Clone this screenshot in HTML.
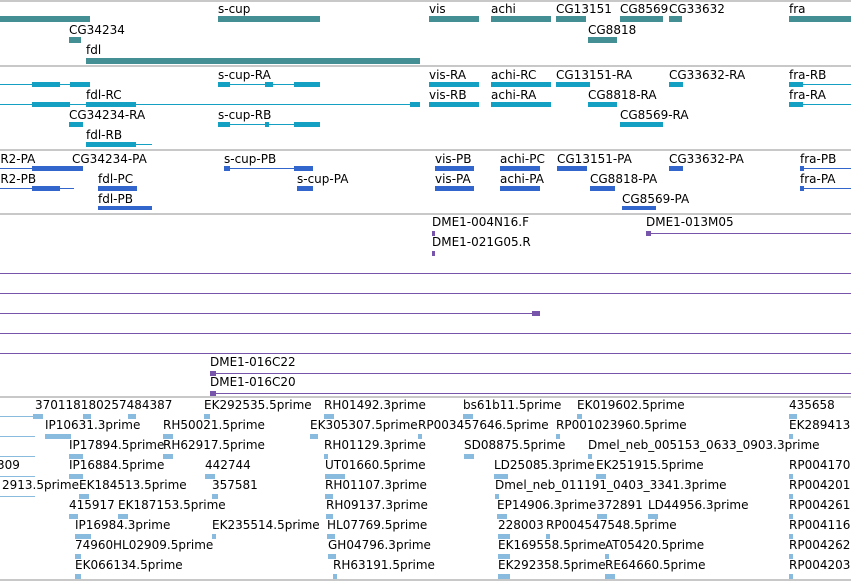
<!DOCTYPE html><html><head><meta charset="utf-8"><style>
body{margin:0;width:851px;height:582px;overflow:hidden;background:#fff;position:relative;font-family:"DejaVu Sans","Liberation Sans",sans-serif;font-size:12px;color:#000}
i{position:absolute;font-style:normal;white-space:nowrap;line-height:14px}
b{position:absolute;display:block}
.s{height:2px;background:#c8c8c8;left:0;width:851px}
.g{background:#438f94;height:6px}
.tl{background:#13a0c2;height:1px}.te{background:#13a0c2;height:5px}
.pl{background:#3366cc;height:1px}.pe{background:#3366cc;height:5px}
.ul{background:#7755aa;height:1px}.ue{background:#7755aa;height:5px}
.el{background:#88bbdd;height:1px}.ee{background:#88bbdd;height:5px}
</style></head><body>
<b class="s" style="top:0px"></b><b class="s" style="top:65px"></b><b class="s" style="top:149px"></b><b class="s" style="top:213px"></b><b class="s" style="top:396px"></b><b class="s" style="top:579px"></b>
<!-- genes -->
<b class="g" style="left:0;top:16px;width:90px"></b><i style="left:69px;top:23px">CG34234</i><b class="g" style="left:69px;top:37px;width:12px"></b>
<i style="left:86px;top:43px">fdl</i><b class="g" style="left:86px;top:58px;width:334px"></b>
<i style="left:218px;top:2px">s-cup</i><b class="g" style="left:218px;top:16px;width:102px"></b>
<i style="left:429px;top:2px">vis</i><b class="g" style="left:429px;top:16px;width:50px"></b>
<i style="left:491px;top:2px">achi</i><b class="g" style="left:491px;top:16px;width:60px"></b>
<i style="left:556px;top:2px">CG13151</i><b class="g" style="left:556px;top:16px;width:30px"></b>
<i style="left:620px;top:2px">CG8569</i><b class="g" style="left:620px;top:16px;width:43px"></b>
<i style="left:669px;top:2px">CG33632</i><b class="g" style="left:669px;top:16px;width:13px"></b>
<i style="left:588px;top:23px">CG8818</i><b class="g" style="left:588px;top:37px;width:29px"></b>
<i style="left:789px;top:2px">fra</i><b class="g" style="left:789px;top:16px;width:62px"></b>
<!-- transcripts -->
<b class="tl" style="left:0;top:84px;width:90px"></b><b class="te" style="left:32px;top:82px;width:28px"></b><b class="te" style="left:70px;top:82px;width:20px"></b>
<i style="left:218px;top:68px">s-cup-RA</i><b class="tl" style="left:218px;top:84px;width:102px"></b><b class="te" style="left:218px;top:82px;width:12px"></b><b class="te" style="left:265px;top:82px;width:8px"></b><b class="te" style="left:294px;top:82px;width:26px"></b>
<i style="left:429px;top:68px">vis-RA</i><b class="te" style="left:429px;top:82px;width:50px"></b>
<i style="left:491px;top:68px">achi-RC</i><b class="te" style="left:491px;top:82px;width:60px"></b>
<i style="left:556px;top:68px">CG13151-RA</i><b class="te" style="left:556px;top:82px;width:34px"></b>
<i style="left:669px;top:68px">CG33632-RA</i><b class="te" style="left:669px;top:82px;width:14px"></b>
<i style="left:789px;top:68px">fra-RB</i><b class="tl" style="left:789px;top:84px;width:62px"></b><b class="te" style="left:789px;top:82px;width:14px"></b>
<b class="tl" style="left:0;top:104px;width:420px"></b><b class="te" style="left:32px;top:102px;width:38px"></b><b class="te" style="left:86px;top:102px;width:50px"></b><b class="te" style="left:410px;top:102px;width:10px"></b>
<i style="left:86px;top:88px">fdl-RC</i>
<i style="left:429px;top:88px">vis-RB</i><b class="te" style="left:429px;top:102px;width:50px"></b>
<i style="left:491px;top:88px">achi-RA</i><b class="te" style="left:491px;top:102px;width:60px"></b>
<i style="left:588px;top:88px">CG8818-RA</i><b class="te" style="left:588px;top:102px;width:29px"></b>
<i style="left:789px;top:88px">fra-RA</i><b class="tl" style="left:789px;top:104px;width:62px"></b><b class="te" style="left:789px;top:102px;width:14px"></b>
<i style="left:69px;top:108px">CG34234-RA</i><b class="te" style="left:69px;top:122px;width:14px"></b>
<i style="left:218px;top:108px">s-cup-RB</i><b class="tl" style="left:218px;top:124px;width:102px"></b><b class="te" style="left:218px;top:122px;width:12px"></b><b class="te" style="left:265px;top:122px;width:4px"></b><b class="te" style="left:294px;top:122px;width:26px"></b>
<i style="left:620px;top:108px">CG8569-RA</i><b class="te" style="left:620px;top:122px;width:43px"></b>
<i style="left:86px;top:128px">fdl-RB</i><b class="tl" style="left:86px;top:144px;width:66px"></b><b class="te" style="left:86px;top:142px;width:50px"></b>
<!-- proteins -->
<i style="left:-4px;top:152px">-R2-PA</i><b class="pl" style="left:0;top:168px;width:83px"></b><b class="pe" style="left:32px;top:166px;width:51px"></b>
<i style="left:72px;top:152px">CG34234-PA</i>
<i style="left:224px;top:152px">s-cup-PB</i><b class="pl" style="left:224px;top:168px;width:89px"></b><b class="pe" style="left:224px;top:166px;width:6px"></b><b class="pe" style="left:294px;top:166px;width:19px"></b>
<i style="left:435px;top:152px">vis-PB</i><b class="pe" style="left:435px;top:166px;width:39px"></b>
<i style="left:500px;top:152px">achi-PC</i><b class="pe" style="left:500px;top:166px;width:40px"></b>
<i style="left:557px;top:152px">CG13151-PA</i><b class="pe" style="left:557px;top:166px;width:30px"></b>
<i style="left:669px;top:152px">CG33632-PA</i><b class="pe" style="left:669px;top:166px;width:14px"></b>
<i style="left:800px;top:152px">fra-PB</i><b class="pl" style="left:800px;top:168px;width:51px"></b><b class="pe" style="left:800px;top:166px;width:4px"></b>
<i style="left:-4px;top:172px">-R2-PB</i><b class="pl" style="left:0;top:188px;width:74px"></b><b class="pe" style="left:32px;top:186px;width:28px"></b>
<i style="left:98px;top:172px">fdl-PC</i><b class="pe" style="left:98px;top:186px;width:39px"></b>
<i style="left:297px;top:172px">s-cup-PA</i><b class="pe" style="left:297px;top:186px;width:16px"></b>
<i style="left:435px;top:172px">vis-PA</i><b class="pe" style="left:435px;top:186px;width:39px"></b>
<i style="left:500px;top:172px">achi-PA</i><b class="pe" style="left:500px;top:186px;width:40px"></b>
<i style="left:590px;top:172px">CG8818-PA</i><b class="pe" style="left:590px;top:186px;width:25px"></b>
<i style="left:800px;top:172px">fra-PA</i><b class="pl" style="left:800px;top:188px;width:51px"></b><b class="pe" style="left:800px;top:186px;width:4px"></b>
<i style="left:98px;top:192px">fdl-PB</i><b class="pe" style="left:98px;top:206px;width:54px;height:4px"></b>
<i style="left:622px;top:192px">CG8569-PA</i><b class="pe" style="left:622px;top:206px;width:34px;height:4px"></b>
<!-- purple -->
<i style="left:432px;top:215px">DME1-004N16.F</i><b class="ue" style="left:432px;top:231px;width:3px"></b>
<i style="left:432px;top:235px">DME1-021G05.R</i><b class="ue" style="left:432px;top:251px;width:3px"></b>
<i style="left:646px;top:215px">DME1-013M05</i><b class="ul" style="left:646px;top:233px;width:205px"></b><b class="ue" style="left:646px;top:231px;width:5px"></b>
<b class="ul" style="left:0;top:273px;width:851px"></b><b class="ul" style="left:0;top:293px;width:851px"></b>
<b class="ul" style="left:0;top:313px;width:540px"></b><b class="ue" style="left:532px;top:311px;width:8px"></b>
<b class="ul" style="left:0;top:333px;width:851px"></b><b class="ul" style="left:0;top:353px;width:851px"></b>
<i style="left:210px;top:355px">DME1-016C22</i><b class="ul" style="left:210px;top:373px;width:641px"></b><b class="ue" style="left:210px;top:371px;width:6px"></b>
<i style="left:210px;top:375px">DME1-016C20</i><b class="ul" style="left:210px;top:393px;width:641px"></b><b class="ue" style="left:210px;top:391px;width:6px"></b>
<!-- ESTs -->
<b class="el" style="left:0;top:416px;width:35px"></b><b class="el" style="left:0;top:436px;width:35px"></b><b class="el" style="left:0;top:456px;width:35px"></b><b class="el" style="left:0;top:476px;width:35px"></b><b class="el" style="left:0;top:496px;width:35px"></b>
<i style="left:35px;top:398px">370118180257484387</i><b class="ee" style="left:33px;top:414px;width:10px"></b><b class="ee" style="left:83px;top:414px;width:8px"></b><b class="ee" style="left:128px;top:414px;width:8px"></b>
<i style="left:204px;top:398px">EK292535.5prime</i><b class="ee" style="left:204px;top:414px;width:6px"></b>
<i style="left:324px;top:398px">RH01492.3prime</i><b class="ee" style="left:324px;top:414px;width:10px"></b>
<i style="left:463px;top:398px">bs61b11.5prime</i><b class="ee" style="left:463px;top:414px;width:10px"></b>
<i style="left:577px;top:398px">EK019602.5prime</i><b class="ee" style="left:577px;top:414px;width:5px"></b>
<i style="left:789px;top:398px">435658</i><b class="ee" style="left:789px;top:414px;width:8px"></b>
<i style="left:45px;top:418px">IP10631.3prime</i><b class="ee" style="left:45px;top:434px;width:26px"></b>
<i style="left:163px;top:418px">RH50021.5prime</i><b class="ee" style="left:163px;top:434px;width:10px"></b>
<i style="left:310px;top:418px">EK305307.5prime</i><b class="ee" style="left:310px;top:434px;width:8px"></b>
<i style="left:418px;top:418px">RP003457646.5prime</i><b class="ee" style="left:418px;top:434px;width:4px"></b>
<i style="left:556px;top:418px">RP001023960.5prime</i><b class="ee" style="left:556px;top:434px;width:4px"></b>
<i style="left:789px;top:418px">EK289413</i><b class="ee" style="left:789px;top:434px;width:4px"></b>
<i style="left:69px;top:438px">IP17894.5prime</i><b class="ee" style="left:69px;top:454px;width:14px"></b>
<i style="left:163px;top:438px">RH62917.5prime</i><b class="ee" style="left:163px;top:454px;width:10px"></b>
<i style="left:324px;top:438px">RH01129.3prime</i><b class="ee" style="left:324px;top:454px;width:4px"></b>
<i style="left:464px;top:438px">SD08875.5prime</i><b class="ee" style="left:464px;top:454px;width:10px"></b>
<i style="left:588px;top:438px">Dmel_neb_005153_0633_0903.3prime</i><b class="ee" style="left:588px;top:454px;width:4px"></b>
<i style="left:-3px;top:458px">309</i>
<i style="left:69px;top:458px">IP16884.5prime</i><b class="ee" style="left:69px;top:474px;width:14px"></b>
<i style="left:205px;top:458px">442744</i><b class="ee" style="left:205px;top:474px;width:10px"></b>
<i style="left:325px;top:458px">UT01660.5prime</i><b class="ee" style="left:325px;top:474px;width:20px"></b>
<i style="left:494px;top:458px">LD25085.3prime</i><b class="ee" style="left:494px;top:474px;width:14px"></b>
<i style="left:596px;top:458px">EK251915.5prime</i><b class="ee" style="left:596px;top:474px;width:10px"></b>
<i style="left:789px;top:458px">RP004170</i><b class="ee" style="left:789px;top:474px;width:4px"></b>
<i style="left:2px;top:478px">2913.5prime</i>
<i style="left:79px;top:478px">EK184513.5prime</i><b class="ee" style="left:79px;top:494px;width:10px"></b>
<i style="left:212px;top:478px">357581</i><b class="ee" style="left:212px;top:494px;width:6px"></b>
<i style="left:325px;top:478px">RH01107.3prime</i><b class="ee" style="left:325px;top:494px;width:8px"></b>
<i style="left:495px;top:478px">Dmel_neb_011191_0403_3341.3prime</i><b class="ee" style="left:495px;top:494px;width:4px"></b>
<i style="left:789px;top:478px">RP004201</i><b class="ee" style="left:789px;top:494px;width:4px"></b>
<i style="left:69px;top:498px">415917</i><b class="ee" style="left:69px;top:514px;width:9px"></b>
<i style="left:118px;top:498px">EK187153.5prime</i><b class="ee" style="left:118px;top:514px;width:10px"></b>
<i style="left:326px;top:498px">RH09137.3prime</i><b class="ee" style="left:326px;top:514px;width:7px"></b>
<i style="left:497px;top:498px">EP14906.3prime</i><b class="ee" style="left:497px;top:514px;width:10px"></b>
<i style="left:597px;top:498px">372891</i><b class="ee" style="left:597px;top:514px;width:10px"></b>
<i style="left:648px;top:498px">LD44956.3prime</i><b class="ee" style="left:648px;top:514px;width:10px"></b>
<i style="left:789px;top:498px">RP004261</i><b class="ee" style="left:789px;top:514px;width:4px"></b>
<i style="left:75px;top:518px">IP16984.3prime</i><b class="ee" style="left:75px;top:534px;width:16px"></b>
<i style="left:212px;top:518px">EK235514.5prime</i><b class="ee" style="left:212px;top:534px;width:4px"></b>
<i style="left:327px;top:518px">HL07769.5prime</i><b class="ee" style="left:327px;top:534px;width:8px"></b>
<i style="left:498px;top:518px">228003</i><b class="ee" style="left:498px;top:534px;width:12px"></b>
<i style="left:546px;top:518px">RP004547548.5prime</i><b class="ee" style="left:546px;top:534px;width:4px"></b>
<i style="left:789px;top:518px">RP004116</i><b class="ee" style="left:789px;top:534px;width:4px"></b>
<i style="left:75px;top:538px">74960</i><b class="ee" style="left:75px;top:554px;width:6px"></b>
<i style="left:113px;top:538px">HL02909.5prime</i>
<i style="left:328px;top:538px">GH04796.3prime</i><b class="ee" style="left:328px;top:554px;width:8px"></b>
<i style="left:498px;top:538px">EK169558.5prime</i><b class="ee" style="left:498px;top:554px;width:12px"></b>
<i style="left:605px;top:538px">AT05420.5prime</i><b class="ee" style="left:605px;top:554px;width:4px"></b>
<i style="left:789px;top:538px">RP004262</i><b class="ee" style="left:789px;top:554px;width:4px"></b>
<i style="left:75px;top:558px">EK066134.5prime</i><b class="ee" style="left:75px;top:574px;width:6px"></b>
<i style="left:333px;top:558px">RH63191.5prime</i><b class="ee" style="left:333px;top:574px;width:4px"></b>
<i style="left:498px;top:558px">EK292358.5prime</i><b class="ee" style="left:498px;top:574px;width:12px"></b>
<i style="left:605px;top:558px">RE64660.5prime</i><b class="ee" style="left:605px;top:574px;width:10px"></b>
<i style="left:789px;top:558px">RP004203</i><b class="ee" style="left:789px;top:574px;width:4px"></b>
</body></html>
